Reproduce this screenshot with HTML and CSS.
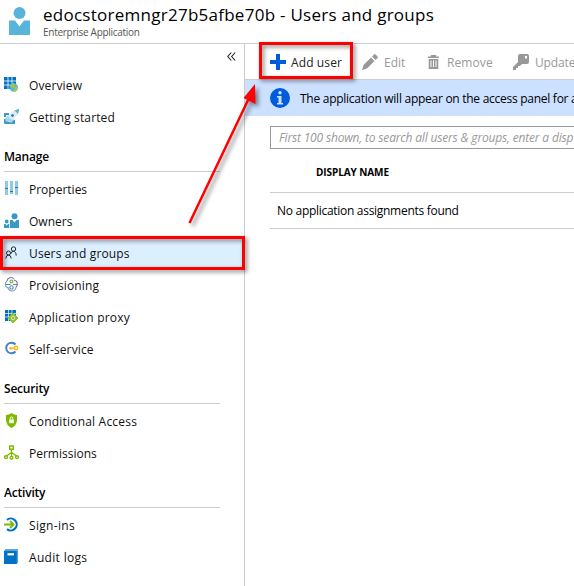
FILE: index.html
```html
<!DOCTYPE html>
<html lang="en">
<head>
<meta charset="utf-8">
<title>Users and groups</title>
<link rel="stylesheet" href="styles.css">
</head>
<body>
<div class="app">
  <header class="header">
    <svg class="avatar" width="22" height="29" viewBox="0 0 22 29"><circle cx="10.500" cy="6" r="6" fill="#59b4d9"/><path d="M0 13.500h6l4.500 6 4.500-6h6V28H0z" fill="#59b4d9"/></svg>
    <div>
      <h1 class="title"><span>edocstoremngr27b5afbe70b - Users and groups</span></h1>
      <div class="subtitle"><span>Enterprise Application</span></div>
    </div>
  </header>
  <div class="body">
    <nav class="sidebar">
      <div class="collapse"><svg width="9" height="9" viewBox="0 0 9 9" fill="none" stroke="#222" stroke-width="1.100"><path d="M4.300.5.8 4.500l3.500 4M8.200.5 4.700 4.500l3.500 4"/></svg></div>
      <a class="item"><svg width="16" height="16" viewBox="0 0 16 16"><path d="M0 0h12v12H0z" fill="#0072c6"/><path d="M4 0v12M8 0v12M0 4h12M0 8h12" stroke="#fff" stroke-width=".8"/><circle cx="9.800" cy="10.500" r="4.200" fill="#59b4d9"/><path d="M6 9l3-3 2 1-1 2 1 1-2 1zM10 13l1-3 3-1-1 4-2 2z" fill="#a5c93a"/></svg><span class="wide">Overview</span></a>
      <a class="item"><svg width="16" height="16" viewBox="0 0 16 16"><path d="M0 4h5v2H2v2H0zM0 10h3v2l2 1h3v-2h3v4H1q-1 0-1-1z" fill="#3999c6"/><path d="M1 9l4-3 5 5-3 3-3-2-2 1z" fill="#a9d5ea"/><path d="M4 7.500 9 2l6-2-1.500 6L8 11z" fill="#dfe9ee"/><path d="M10.500 1.500 15.500-.5 14 5z" fill="#59b4d9"/><circle cx="8.500" cy="6.500" r="1.300" fill="#0072c6"/></svg><span class="wide">Getting started</span></a>
      <h2 class="group"><span>Manage</span></h2>
      <a class="item"><svg width="16" height="16" viewBox="0 0 16 16"><path d="M2.500 0v14M7.500 0v13M12.500 0v14" stroke="#8ccbe4" stroke-width="3"/><path d="M1 7.500h3M6 10.500h3M11 6.500h3" stroke="#3b6f8a" stroke-width="1.200"/></svg><span>Properties</span></a>
      <a class="item"><svg width="16" height="16" viewBox="0 0 16 16" fill="#3999c6"><circle cx="10.500" cy="3.200" r="3"/><path d="M6 7h2.500l2 2.500L12.500 7H15v8H6z"/><circle cx="2.700" cy="8.500" r="1.900"/><path d="M0 11h1.500l1.200 1.500L4 11h1.200v4H0z"/></svg><span>Owners</span></a>
      <a class="item active"><svg width="16" height="16" viewBox="0 0 16 16" fill="none" stroke="#24292e"><circle cx="9.500" cy="4" r="2.200"/><circle cx="4.500" cy="8" r="2"/><path d="M6.700 9Q7 6.300 9.500 6.300t2.700 4.300M1.800 13.500Q2 10.100 4.500 10.100T7.200 13.500"/></svg><span class="wide">Users and groups</span></a>
      <a class="item"><svg width="16" height="16" viewBox="0 0 16 16" fill="none" stroke-width="1.100"><path d="M4 11A4 4 0 0 1 3 4" stroke="#59a8cc"/><path d="M3 4A4 4 0 0 1 10 2" stroke="#8562aa"/><path d="M10 3a4 4 0 0 1 2 7" stroke="#7a6aa6"/><path d="M4 10a4 4 0 0 0 8 0" stroke="#8b93b6"/><circle cx="7.500" cy="4.500" r="1.500" stroke="#6bb42c"/><circle cx="7.500" cy="10.500" r="1.700" stroke="#3999c6"/><path d="M2 7.500h4.500M9 7.500h4" stroke="#6c79a6"/></svg><span class="wide">Provisioning</span></a>
      <a class="item"><svg width="16" height="16" viewBox="0 0 16 16"><path d="M1 1h11v11H1z" fill="#0072c6"/><path d="M4.500 1v11M8 1v11M1 4.500h11M1 8h11" stroke="#fff" stroke-width=".7"/><path d="m9 4 5 5-5 5-5-5z" fill="#8dbf2e" stroke="#8dbf2e" stroke-linejoin="round"/><circle cx="9" cy="9" r="1.800" fill="none" stroke="#d9ebae"/></svg><span class="wider">Application proxy</span></a>
      <a class="item"><svg width="16" height="16" viewBox="0 0 16 16" fill="none"><path d="M11.500 3.500A5.300 5.300 0 1 0 11.500 10.500" stroke="#3683cd" stroke-width="1.900"/><path d="M5 7h6M7 7v2" stroke="#fdb714" stroke-width="1.500"/><circle cx="12" cy="7" r="1.700" stroke="#fdb714" stroke-width="1.500"/></svg><span class="wide">Self-service</span></a>
      <h2 class="group"><span>Security</span></h2>
      <a class="item"><svg width="16" height="16" viewBox="0 0 16 16"><path d="M7.500 0Q10 2 13 2v5q0 5-5.500 8Q2 12 2 7V2Q5 2 7.500 0z" fill="#7fba00"/><path d="M5.200 6.500h4.600v3.700H5.200z" fill="#fff"/><path d="M6.200 6.500V5.300a1.300 1.300 0 0 1 2.600 0v1.200" fill="none" stroke="#fff"/></svg><span class="wider">Conditional Access</span></a>
      <a class="item"><svg width="16" height="16" viewBox="0 0 16 16" fill="none" stroke="#7fba00" stroke-width="1.400"><path d="M5.700 1h3.600v3.200H5.700zM7.500 4.500v7M7.500 7.500l-5 3.500M7.500 7.500l5 3.500"/><circle cx="2" cy="12.200" r="1.400"/><circle cx="7.500" cy="12.800" r="1.400"/><circle cx="13" cy="12.200" r="1.400"/></svg><span>Permissions</span></a>
      <h2 class="group activity"><span>Activity</span></h2>
      <a class="item"><svg width="16" height="16" viewBox="0 0 16 16" fill="none"><path d="M3 2.800A6 6 0 1 1 3 12.200" stroke="#0072c6" stroke-width="2.200"/><path d="M0 7.500h9M6 4 9.500 7.500 6 11" stroke="#7fba00" stroke-width="1.900"/></svg><span class="widest">Sign-ins</span></a>
      <a class="item"><svg width="16" height="16" viewBox="0 0 16 16"><path d="M1.500 0H14v13.500l-1.500 1.500H0V2z" fill="#5ba3da"/><path d="M0 2h12.800v13H0z" fill="#0072c6"/><path d="M3.500 4.200h6.500v2.200H3.500z" fill="#fff"/></svg><span class="widest">Audit logs</span></a>
    </nav>
    <main class="main">
      <div class="toolbar">
        <div class="cmd add"><svg width="16" height="16" viewBox="0 0 16 16"><path d="M8 0v16M0 8h16" stroke="#015cda" stroke-width="4"/></svg><span>Add user</span></div>
        <div class="cmd edit"><svg width="16" height="16" viewBox="0 0 16 16" fill="#999"><path d="M0 16l1.500-5L9 3.500 12.500 7 5 14.500zM10 2.500 12 .5q.8-.8 1.600 0l1.900 1.900q.8.8 0 1.600l-2 2z"/></svg><span>Edit</span></div>
        <div class="cmd remove"><svg width="11" height="14" viewBox="0 0 11 14"><path d="M0 2.300h11M3.500 2V.7h4V2" fill="none" stroke="#999" stroke-width="1.400"/><path d="M.7 4h9.600v10H.7z" fill="#999"/><path d="M3 5.500V12M5.500 5.500V12M8 5.500V12" stroke="#fff" stroke-width="1"/></svg><span>Remove</span></div>
        <div class="cmd update"><svg width="16" height="16" viewBox="0 0 16 16" fill="#999"><path fill-rule="evenodd" d="M7 0h7q2 0 2 2v6q0 2-2 2H9l-2 2H5v2H3v2H0v-3l5-5V2q0-2 2-2zm5 2v2.500h2V2z"/></svg><span>Update</span></div>
      </div>
      <div class="banner"><svg width="20" height="20" viewBox="0 0 20 20"><circle cx="10" cy="10" r="10" fill="#015cda"/><circle cx="10" cy="4.800" r="1.700" fill="#cce0ff"/><path d="M7 8h4.500v7H13v1.500H7V15h1.500V9.500H7z" fill="#cce0ff"/></svg><span>The application will appear on the access panel for a</span></div>
      <div class="search"><span>First 100 shown, to search all users &amp; groups, enter a disp</span></div>
      <div class="thead"><span>DISPLAY NAME</span></div>
      <div class="trow"><span>No application assignments found</span></div>
    </main>
  </div>
  <div class="mark mark-add"></div>
  <div class="mark mark-users"></div>
  <svg class="arrow" width="90" height="160" viewBox="0 0 90 160"><path d="M14.500 148 74.500 22" stroke="#f00" stroke-width="2.500"/><path d="m80 9 .5 20L68.500 23z" fill="#f00"/></svg>
</div>
</body>
</html>
```
FILE: styles.css
```css
* { box-sizing: border-box; }
body { margin: 0; background: #fff; color: #000; font: 12px/16px "Open Sans", "Noto Sans", sans-serif; }
.app { position: relative; width: 574px; height: 586px; overflow: hidden; display: flex; flex-direction: column; }
span { white-space: nowrap; }
svg { flex: none; }
.header { height: 44px; flex: none; display: flex; gap: 12px; padding: 7px 0 0 9px; border-bottom: 1px solid #ccc; }
.title { margin: -2px 0 0; font-size: 17px; line-height: 20px; font-weight: 500; letter-spacing: .26px; }
.subtitle { font-size: 10px; line-height: 14px; color: #555; letter-spacing: -.28px; }
.body { display: flex; flex: 1; min-height: 0; }
.sidebar { width: 245px; flex: none; border-right: 1px solid #ccc; }
.collapse { height: 25px; display: flex; justify-content: flex-end; padding: 8px 8px 0 0; }
.item { height: 32px; display: flex; align-items: center; gap: 9px; padding-left: 4px; color: #111; }
.item span { padding-top: 2px; }
.wide { letter-spacing: .13px; }
.wider { letter-spacing: .2px; }
.widest { letter-spacing: .32px; }
.active { background: #dcefff; }
.group { height: 39px; margin: 0 24px 1px 4px; padding-top: 16px; border-bottom: 1px solid #ccc; font-size: 12px; line-height: 16px; font-weight: 600; letter-spacing: -.2px; }
.main { flex: 1; min-width: 0; }
.toolbar { height: 36px; display: flex; align-items: center; padding-left: 25px; border-bottom: 1px solid #ccc; color: #999; }
.cmd { display: flex; align-items: center; flex: none; gap: 6px; }
.cmd span { padding-top: 2px; }
.add { color: #222; width: 92px; gap: 5px; letter-spacing: .12px; }
.edit { width: 66px; }
.remove { width: 85px; gap: 8px; letter-spacing: .1px; }
.update { letter-spacing: -.15px; }
.banner { height: 36px; display: flex; align-items: center; gap: 10px; padding-left: 25px; background: #cce0ff; letter-spacing: -.27px; }
.banner span { padding-top: 2px; }
.search { height: 23px; margin: 10px -10px 0 25px; padding: 3px 8px; border: 1px solid #999; color: #999; font-style: italic; line-height: 16px; letter-spacing: -.18px; }
.thead { height: 44px; margin-left: 25px; padding: 15px 0 0 46px; border-bottom: 1px solid #ccc; font-size: 10px; font-weight: 700; line-height: 16px; letter-spacing: -.08px; }
.trow { height: 36px; margin-left: 25px; padding: 10px 0 0 7px; border-bottom: 1px solid #ccc; letter-spacing: -.29px; }
.mark { position: absolute; border: 3px solid #f00; filter: drop-shadow(2px 2px 2px rgba(0,0,0,.5)); }
.mark-add { left: 259px; top: 42px; width: 94px; height: 37px; }
.mark-users { left: 0; top: 236px; width: 245px; height: 34px; }
.arrow { position: absolute; left: 175px; top: 75px; filter: drop-shadow(3px 3px 2px rgba(0,0,0,.45)); }
```
